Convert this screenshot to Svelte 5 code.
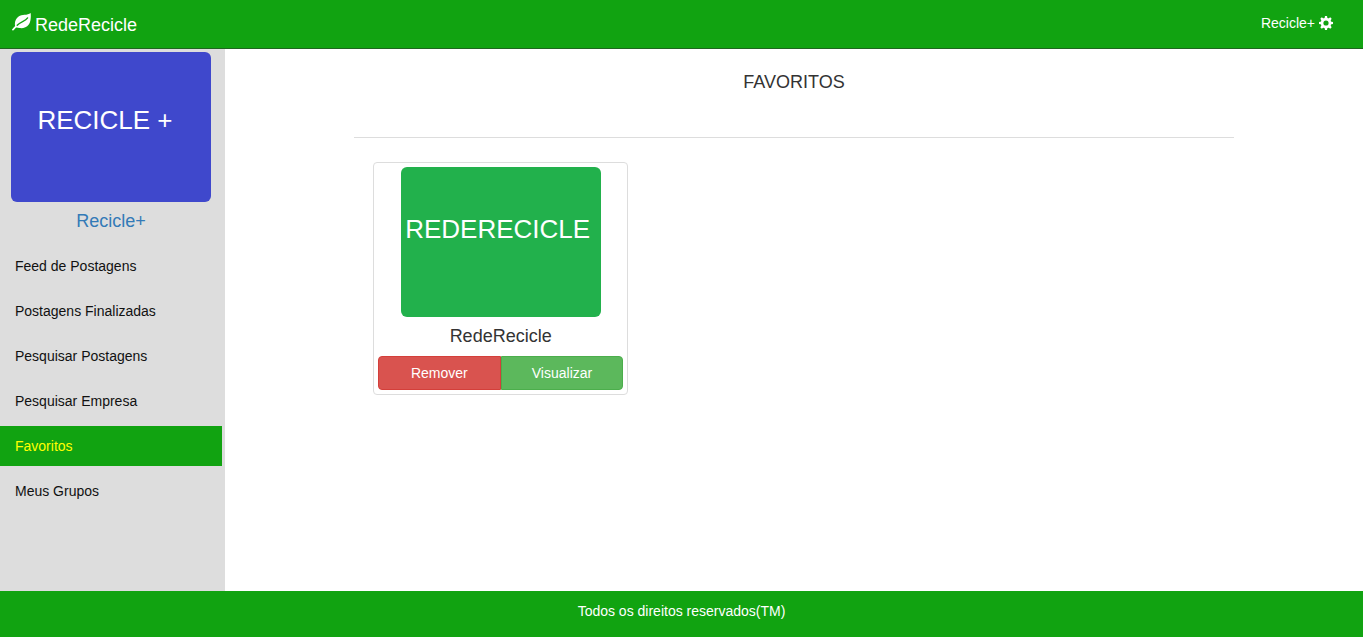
<script>
  const menu = [
    'Feed de Postagens',
    'Postagens Finalizadas',
    'Pesquisar Postagens',
    'Pesquisar Empresa',
    'Favoritos',
    'Meus Grupos'
  ];
  let active = $state('Favoritos');
  let favorites = $state([{ name: 'RedeRecicle', banner: 'REDERECICLE' }]);

  function remove(name) {
    favorites = favorites.filter((item) => item.name !== name);
  }
</script>

<div class="page">
  <header>
    <a class="brand" href="#inicio">
      <svg width="20" height="20" viewBox="0 0 20 20" aria-hidden="true">
        <path
          fill="#fff"
          d="M18.7 1C19 4.8 18.9 9.6 16.6 12.8C14.6 15.6 10.8 16.5 7.4 16C5.9 15.8 4.8 15.4 4 15.7C3.2 16.2 2.3 17.4 1.5 18.3C.8 19.1-.5 18.2.2 17.3C1 16.2 2.4 15.1 3.1 14.1C2.3 10.6 3.6 6.6 6.6 4.5C10 2.2 15.3 3.6 18.7 1Z"
        />
        <path
          d="M15.6 5.9C13.2 9.5 8.6 9.4 5.2 13.2"
          fill="none"
          stroke="#11a311"
          stroke-width="1.3"
          stroke-linecap="round"
        />
      </svg>
      <span>RedeRecicle</span>
    </a>
    <button class="account" type="button">
      <span>Recicle+</span>
      <svg width="14" height="14" viewBox="0 0 14 14" aria-hidden="true">
        <g fill="#fff">
          {#each [0, 45, 90, 135] as angle}
            <path d="M6 0h2l.5 2.5v9L8 14H6l-.5-2.5v-9z" transform="rotate({angle} 7 7)" />
          {/each}
          <circle cx="7" cy="7" r="5.2" />
        </g>
        <circle cx="7" cy="7" r="2.6" fill="#11a311" />
      </svg>
    </button>
  </header>

  <div class="body">
    <aside>
      <div class="banner blue">RECICLE +</div>
      <h4><a href="#perfil">Recicle+</a></h4>
      <nav>
        {#each menu as item}
          <a href="#menu" class:active={active === item} onclick={() => (active = item)}>{item}</a>
        {/each}
      </nav>
    </aside>

    <main>
      <h1>FAVORITOS</h1>
      <hr />
      <div class="cards">
        {#each favorites as item (item.name)}
          <article>
            <div class="banner green">{item.banner}</div>
            <h4>{item.name}</h4>
            <div class="actions">
              <button class="danger" type="button" onclick={() => remove(item.name)}>Remover</button>
              <button class="success" type="button">Visualizar</button>
            </div>
          </article>
        {/each}
      </div>
    </main>
  </div>

  <footer>Todos os direitos reservados(TM)</footer>
</div>

<style>
  :global(body) {
    margin: 0;
  }
  .page,
  .page * {
    box-sizing: border-box;
  }
  .page {
    display: flex;
    flex-direction: column;
    min-height: 100vh;
    font: 14px/20px 'Liberation Sans', Arial, sans-serif;
    color: #333;
    background: #fff;
  }
  header {
    display: flex;
    justify-content: space-between;
    align-items: center;
    padding: 12px 30px 10px 12px;
    background: #11a311;
    border-bottom: 1px solid #1f661f;
  }
  .brand {
    display: flex;
    gap: 3px;
    color: #fff;
    font-size: 18px;
    line-height: 26px;
    text-decoration: none;
  }
  .account {
    display: flex;
    align-items: center;
    gap: 4px;
    padding: 0 0 4px;
    border: 0;
    background: none;
    color: #fff;
    font: inherit;
    cursor: pointer;
  }
  .body {
    flex: 1;
    display: flex;
  }
  aside {
    flex: none;
    width: 225px;
    padding: 3px 3px 24px 0;
    background: #ddd;
  }
  .banner {
    width: 200px;
    height: 150px;
    margin: 0 auto;
    padding-top: 50px;
    border-radius: 6px;
    color: #fff;
    font-size: 26px;
    line-height: 36px;
    white-space: nowrap;
    text-align: center;
  }
  .blue {
    padding-right: 12px;
    background: #3f48cc;
  }
  .green {
    padding-top: 44px;
    padding-right: 6px;
    background: #22b14c;
  }
  h1,
  h4 {
    margin: 0;
    font-size: 18px;
    font-weight: 400;
    line-height: 20px;
    text-align: center;
  }
  h4 {
    padding: 9px 0;
  }
  h4 a {
    color: #337ab7;
    text-decoration: none;
  }
  nav {
    display: flex;
    flex-direction: column;
    gap: 5px;
    padding-top: 6px;
  }
  nav a {
    padding: 10px 15px;
    color: #111;
    text-decoration: none;
  }
  nav .active {
    background: #11a311;
    color: #ff0;
  }
  main {
    flex: 1;
    min-width: 0;
    display: flex;
    flex-direction: column;
    align-items: center;
    padding: 23px 20px;
  }
  hr {
    width: 100%;
    max-width: 880px;
    margin: 45px 0 24px;
    border: 0;
    border-top: 1px solid #ddd;
  }
  .cards {
    display: grid;
    grid-template-columns: repeat(auto-fill, minmax(240px, 1fr));
    gap: 38px;
    width: 100%;
    max-width: 880px;
    padding: 0 19px;
  }
  article {
    padding: 4px;
    border: 1px solid #ddd;
    border-radius: 4px;
  }
  .actions {
    display: flex;
    padding-top: 1px;
  }
  .actions button {
    flex: 1;
    padding: 6px 12px;
    border: 1px solid;
    color: #fff;
    font: inherit;
    cursor: pointer;
  }
  .actions .danger {
    background: #d9534f;
    border-color: #d43f3a;
    border-radius: 4px 0 0 4px;
  }
  .actions .success {
    background: #5cb85c;
    border-color: #4cae4c;
    border-radius: 0 4px 4px 0;
  }
  footer {
    padding: 10px 0 16px;
    background: #11a311;
    color: #fff;
    text-align: center;
  }
</style>
